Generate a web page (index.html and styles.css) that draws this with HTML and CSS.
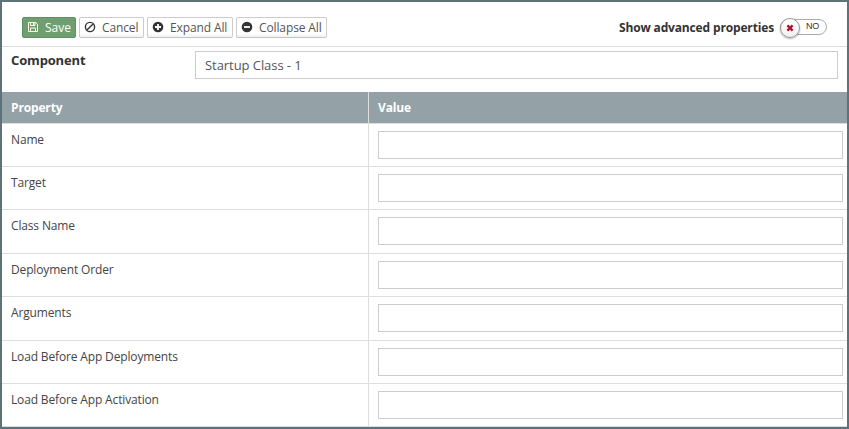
FILE: index.html
```html
<!DOCTYPE html>
<html lang="en">
<head>
<meta charset="utf-8">
<title>Component properties</title>
<link rel="stylesheet" href="styles.css">
</head>
<body>
<div class="panel">
  <header class="toolbar">
    <button class="btn btn-save"><svg class="icon" viewBox="0 0 12 12"><path d="M1.500 1.500h7.300l1.700 1.700v7.300h-9z M3.500 1.500v3h4.500v-3 M3.500 10.500v-3.500h5v3.500" fill="none" stroke="currentColor" stroke-width="1"/><path d="M6 2h1.200v2H6z" fill="currentColor"/></svg><span>Save</span></button>
    <button class="btn btn-cancel"><svg class="icon" viewBox="0 0 12 12"><circle cx="6" cy="6" r="4.600" fill="none" stroke="currentColor" stroke-width="1.400"/><path d="M2.900 9.100l6.200-6.200" stroke="currentColor" stroke-width="1.400"/></svg><span>Cancel</span></button>
    <button class="btn btn-expand"><svg class="icon" viewBox="0 0 12 12"><circle cx="6" cy="6" r="5.300" fill="currentColor"/><path d="M3 6h6M6 3v6" stroke="#fff" stroke-width="1.800"/></svg><span>Expand All</span></button>
    <button class="btn btn-collapse"><svg class="icon" viewBox="0 0 12 12"><circle cx="6" cy="6" r="5.300" fill="currentColor"/><path d="M3 6h6" stroke="#fff" stroke-width="1.800"/></svg><span>Collapse All</span></button>
    <span class="advanced">Show advanced properties</span>
    <div class="toggle"><span class="knob"><svg viewBox="0 0 8 8"><path d="M1.400 1.400l5.200 5.200M6.600 1.400L1.400 6.600" stroke="#b0102f" stroke-width="2.300"/></svg></span><span class="state">NO</span></div>
  </header>
  <div class="component">
    <label for="component">Component</label>
    <input id="component" type="text" value="Startup Class - 1">
  </div>
  <div class="table">
    <div class="row head"><div class="cell">Property</div><div class="cell">Value</div></div>
    <div class="row"><div class="cell">Name</div><div class="cell"><input type="text"></div></div>
    <div class="row"><div class="cell">Target</div><div class="cell"><input type="text"></div></div>
    <div class="row tall"><div class="cell">Class Name</div><div class="cell"><input type="text"></div></div>
    <div class="row"><div class="cell">Deployment Order</div><div class="cell"><input type="text"></div></div>
    <div class="row tall"><div class="cell">Arguments</div><div class="cell"><input type="text"></div></div>
    <div class="row"><div class="cell">Load Before App Deployments</div><div class="cell"><input type="text"></div></div>
    <div class="row"><div class="cell">Load Before App Activation</div><div class="cell"><input type="text"></div></div>
  </div>
</div>
</body>
</html>
```

FILE: styles.css
```css
* { box-sizing: border-box; }
body {
  margin: 0;
  font: 12px/16px "Open Sans", sans-serif;
  letter-spacing: -0.15px;
  color: #444;
}
.panel {
  width: 849px;
  height: 429px;
  border: 2px solid #5e7279;
  background: #fff;
  overflow: hidden;
}
.toolbar {
  display: flex;
  align-items: center;
  height: 45px;
  padding: 6px 20px 0;
  gap: 3px;
  border-bottom: 1px solid #ddd;
}
.btn {
  display: flex;
  align-items: center;
  gap: 6px;
  height: 21px;
  padding: 0 0 0 4px;
  border: 1px solid #ccc;
  border-bottom-color: #c4c4c4;
  border-radius: 2px;
  background: linear-gradient(#fff 80%, #f1f1f1);
  font: 12px/16px "Open Sans", sans-serif;
  letter-spacing: -0.12px;
  color: #555;
  white-space: nowrap;
}
.btn span { padding-top: 1px; }
.icon { width: 12px; height: 12px; flex: none; color: #333; }
.btn-save {
  width: 54px;
  background: #6f9f71;
  border-color: #5f9062;
  color: #fff;
  letter-spacing: 0;
}
.btn-save .icon { color: #fbfbe0; }
.btn-cancel { width: 65px; }
.btn-expand { width: 86px; }
.btn-collapse { width: 91px; }
.advanced {
  margin-left: auto;
  padding-top: 1px;
  font-weight: 700;
  color: #333;
}
.toggle {
  display: flex;
  align-items: center;
  width: 47px;
  height: 16px;
  margin-left: 3px;
  border: 1px solid #aaa;
  border-radius: 8px;
}
.knob {
  display: flex;
  align-items: center;
  justify-content: center;
  flex: none;
  width: 20px;
  height: 20px;
  margin: 1px 0 0 -1px;
  border: 1px solid #999;
  border-radius: 50%;
  background: linear-gradient(#fff, #f0f0f0);
  box-shadow: 0 1px 2px rgba(0, 0, 0, .3);
}
.knob svg { width: 8px; height: 8px; }
.state {
  margin: -3px 0 0 6px;
  font: 9px/12px "Liberation Sans", sans-serif;
  letter-spacing: -0.3px;
  color: #333;
}
.component {
  display: flex;
  height: 45px;
  padding: 4px 9px 0;
}
.component label {
  width: 184px;
  padding-top: 1px;
  font-size: 13px;
  font-weight: 700;
  color: #333;
}
input {
  display: block;
  width: 100%;
  height: 28px;
  padding: 0 9px;
  border: 1px solid #ccc;
  border-radius: 0;
  background: #fff;
  font: 13px/18px "Open Sans", sans-serif;
  letter-spacing: -0.06px;
  color: #555;
}
.component input { width: 643px; }
.row {
  display: grid;
  grid-template-columns: 366px 1fr;
  height: 43px;
  border-bottom: 1px solid #ddd;
}
.row.tall { height: 44px; }
.cell { padding: 8px 9px 0; }
.cell + .cell {
  padding: 7px 4px 0 9px;
  border-left: 1px solid #ddd;
}
.row.head {
  height: 32px;
  background: #94a2a8;
  color: #fff;
  font-weight: 700;
}
.row.head .cell { padding-top: 8px; }
```
